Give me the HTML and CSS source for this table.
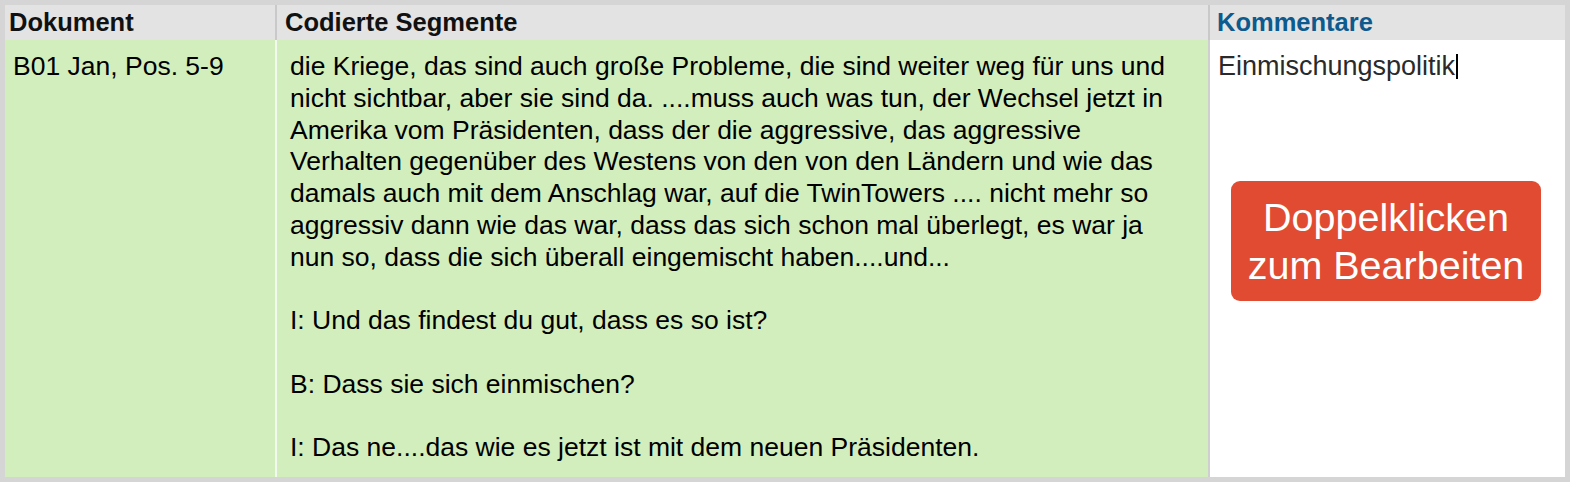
FILE: index.html
```html
<!DOCTYPE html>
<html lang="de">
<head>
<meta charset="utf-8">
<link rel="stylesheet" href="styles.css">
</head>
<body>
<div class="table">
  <div class="th c1">Dokument</div>
  <div class="th c2">Codierte Segmente</div>
  <div class="th c3 blue">Kommentare</div>
  <div class="td c1 green">B01 Jan, Pos. 5-9</div>
  <div class="td c2 green seg">die Kriege, das sind auch große Probleme, die sind weiter weg für uns und<br>nicht sichtbar, aber sie sind da. ....muss auch was tun, der Wechsel jetzt in<br>Amerika vom Präsidenten, dass der die aggressive, das aggressive<br>Verhalten gegenüber des Westens von den von den Ländern und wie das<br>damals auch mit dem Anschlag war, auf die TwinTowers .... nicht mehr so<br>aggressiv dann wie das war, dass das sich schon mal überlegt, es war ja<br>nun so, dass die sich überall eingemischt haben....und...<br><br>I: Und das findest du gut, dass es so ist?<br><br>B: Dass sie sich einmischen?<br><br>I: Das ne....das wie es jetzt ist mit dem neuen Präsidenten.</div>
  <div class="td c3 comment">
    <div class="note">Einmischungspolitik<span class="caret"></span></div>
    <div class="hint">Doppelklicken<br>zum Bearbeiten</div>
  </div>
</div>
</body>
</html>
```
FILE: styles.css
```css
* { box-sizing: border-box; }
html, body { margin: 0; padding: 0; }
body {
  background: #d5d5d5;
  font-family: "Liberation Sans", Arial, sans-serif;
  color: #000;
  width: 1570px;
  height: 482px;
  overflow: hidden;
}
.table {
  margin: 5px;
  display: grid;
  grid-template-columns: 270px 933px 357px;
  grid-template-rows: 35px 437px;
}
.th {
  background: #e3e3e3;
  font-weight: bold;
  font-size: 25.5px;
  display: flex;
  align-items: center;
  padding-left: 4px;
  color: #111;
}
.th.c2 { border-left: 2px solid #c9c9c9; padding-left: 8px; }
.th.c3 { border-left: 2px solid #c9c9c9; padding-left: 7px; }
.blue { color: #0c5a8e; }
.td {
  font-size: 26.5px;
  line-height: 31.75px;
  padding-top: 11px;
  white-space: nowrap;
}
.green { background: #d3eebd; }
.td.c1 { padding-left: 8px; }
.td.c2 { border-left: 2px solid #f4f9ef; padding-left: 13px; }
.td.c3 { border-left: 2px solid #cfcfcf; }
.comment {
  background: #fff;
  display: flex;
  flex-direction: column;
  padding-left: 8px;
}
.note {
  color: #2a2a2a;
  font-size: 27px;
  height: 31.75px;
  display: flex;
  align-items: center;
}
.caret {
  display: inline-block;
  width: 2px;
  height: 25px;
  background: #000;
  margin-left: 1px;
}
.hint {
  margin-top: 98.5px;
  margin-left: 13px;
  width: 310px;
  height: 120px;
  border-radius: 9px;
  background: #e04b32;
  color: #fff;
  font-size: 39.5px;
  line-height: 48px;
  text-align: center;
  display: flex;
  align-items: center;
  justify-content: center;
}
```
